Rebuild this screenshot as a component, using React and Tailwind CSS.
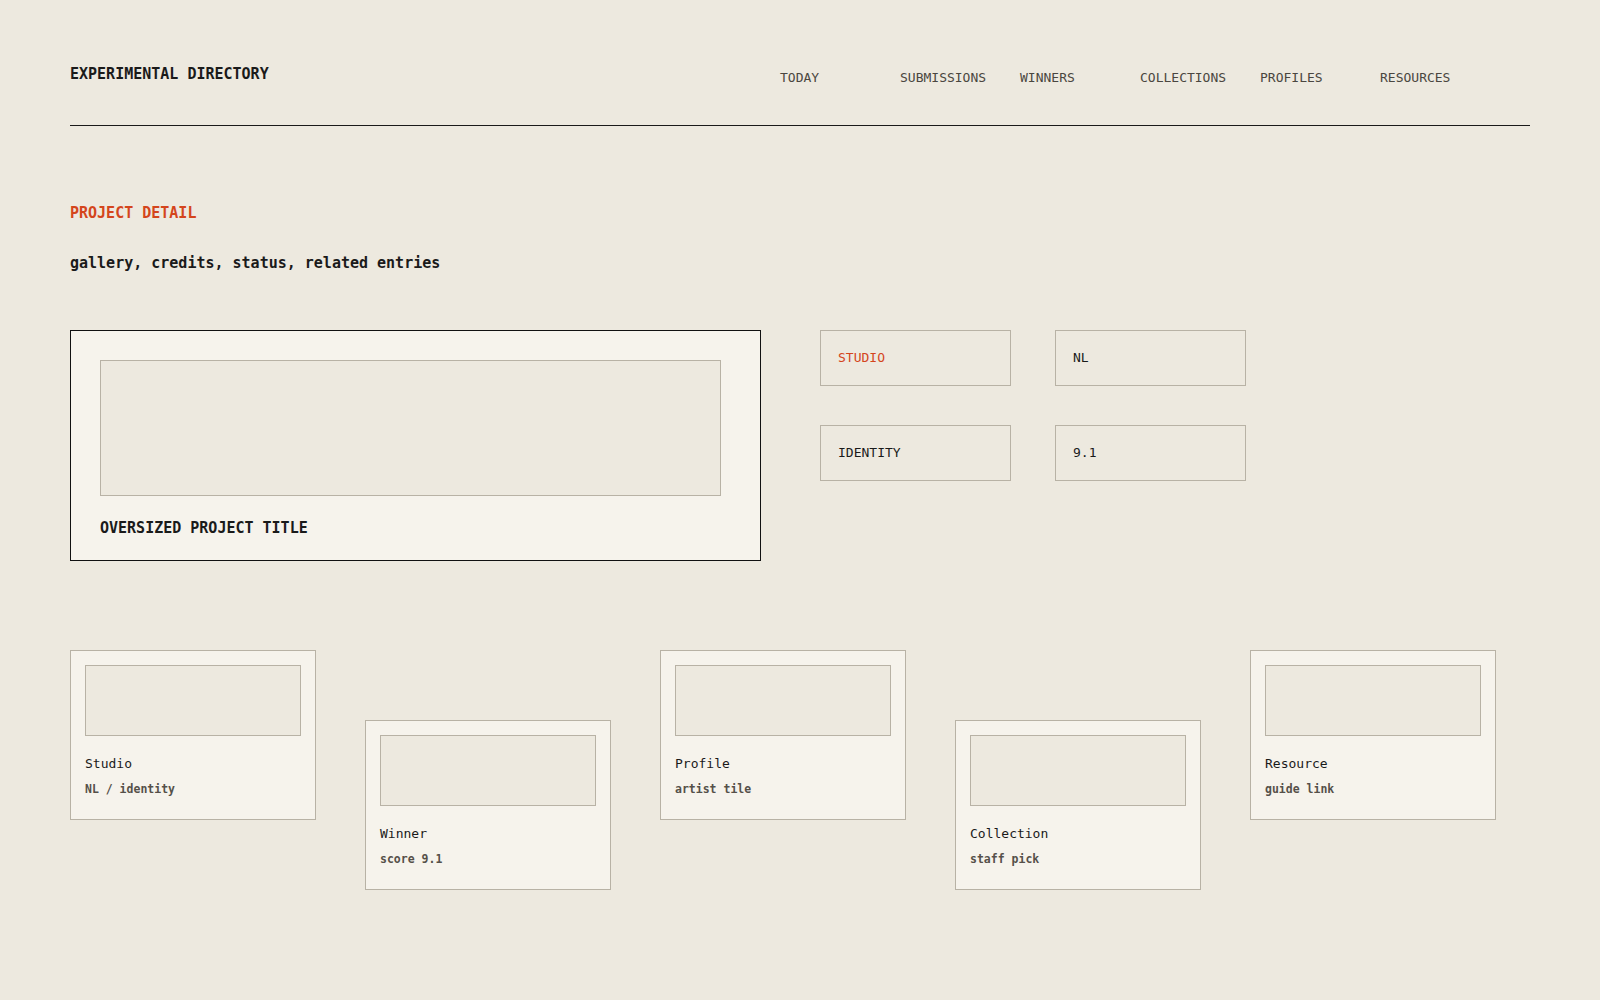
// App.jsx
const navItems = ["TODAY", "SUBMISSIONS", "WINNERS", "COLLECTIONS", "PROFILES", "RESOURCES"];

const facts = [
  { label: "STUDIO", accent: true },
  { label: "NL" },
  { label: "IDENTITY" },
  { label: "9.1" },
];

const related = [
  { title: "Studio", meta: "NL / identity" },
  { title: "Winner", meta: "score 9.1" },
  { title: "Profile", meta: "artist tile" },
  { title: "Collection", meta: "staff pick" },
  { title: "Resource", meta: "guide link" },
];

const RelatedCard = ({ title, meta, lowered }) => (
  <div
    className={`w-[246px] h-[170px] border border-[#b8b2a5] bg-[#f6f3ec] p-[14px] ${
      lowered ? "mt-[70px]" : ""
    }`}
  >
    <div className="h-[71px] border border-[#b8b2a5] bg-[#ede9df]" />
    <p className="mt-[18px] text-[13px] leading-[20px] text-[#1a1a1a]">{title}</p>
    <p className="mt-[7px] text-[11.5px] leading-[16px] font-bold text-[#555049]">{meta}</p>
  </div>
);

const App = () => {
  return (
    <div className="min-h-screen bg-[#ede9df] px-[70px] font-['DejaVu_Sans_Mono',monospace] text-[#1a1a1a]">
      {/* header */}
      <header className="flex justify-between items-start pt-[64px] pb-[37px] border-b border-[#1a1a1a]">
        <h1 className="text-[15px] leading-[20px] font-bold">EXPERIMENTAL DIRECTORY</h1>
        <nav className="grid grid-cols-6 w-[720px] mr-[30px] mt-[4px]">
          {navItems.map((item) => (
            <a key={item} className="text-[13px] leading-[20px] text-[#4a4640]">
              {item}
            </a>
          ))}
        </nav>
      </header>

      {/* intro */}
      <section className="pt-[77px]">
        <p className="text-[15px] leading-[20px] font-bold text-[#d4451c]">PROJECT DETAIL</p>
        <p className="mt-[30px] text-[15px] leading-[20px] font-bold">
          gallery, credits, status, related entries
        </p>
      </section>

      {/* detail */}
      <section className="mt-[57px] flex items-start gap-[59px]">
        <div className="w-[691px] h-[231px] border border-[#111] bg-[#f6f3ec] pt-[29px] pl-[29px]">
          <div className="w-[621px] h-[136px] border border-[#b8b2a5] bg-[#ede9df]" />
          <p className="mt-[22px] text-[15px] leading-[20px] font-bold">OVERSIZED PROJECT TITLE</p>
        </div>

        <div className="grid grid-cols-[191px_191px] gap-x-[44px] gap-y-[39px]">
          {facts.map((f) => (
            <div
              key={f.label}
              className="h-[56px] border border-[#b8b2a5] flex items-center px-[17px]"
            >
              <span
                className={`text-[13px] leading-[20px] ${
                  f.accent ? "text-[#d4451c]" : "text-[#1a1a1a]"
                }`}
              >
                {f.label}
              </span>
            </div>
          ))}
        </div>
      </section>

      {/* related entries */}
      <section className="mt-[89px] flex items-start gap-[49px] pb-[40px]">
        {related.map((r, i) => (
          <RelatedCard key={r.title} {...r} lowered={i % 2 === 1} />
        ))}
      </section>
    </div>
  );
};

export default App;
